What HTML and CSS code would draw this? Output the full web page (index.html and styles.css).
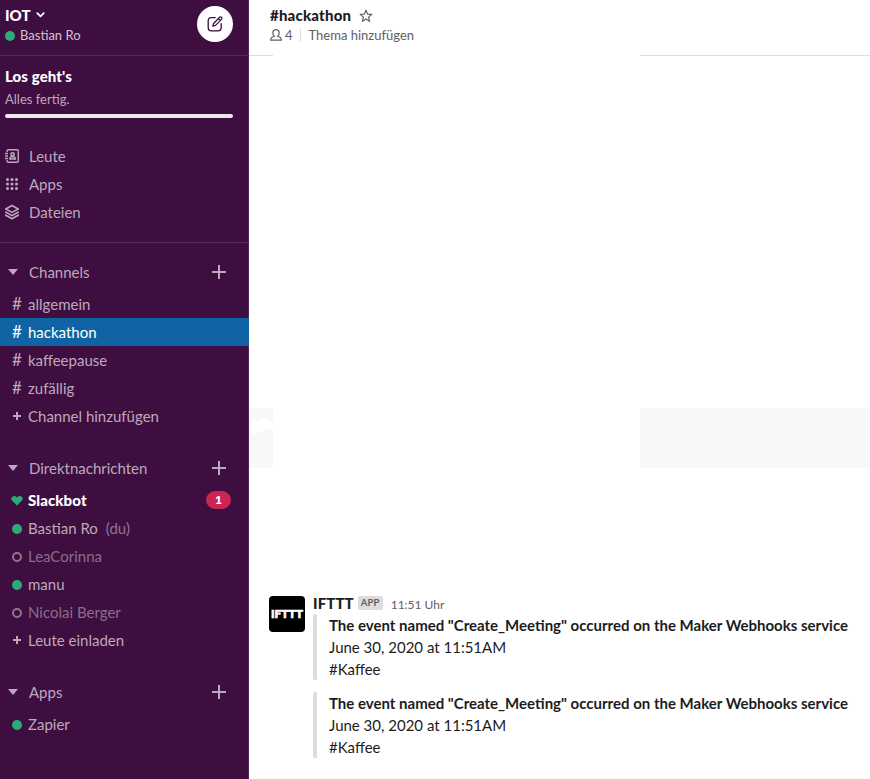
FILE: index.html
```html
<!DOCTYPE html>
<html lang="de">
<head>
<meta charset="utf-8">
<title>#hackathon | IOT</title>
<link rel="stylesheet" href="styles.css">
</head>
<body>
<div class="app">
  <aside class="sidebar">
    <header class="team">
      <div class="team-info">
        <div class="team-name"><span>IOT</span><svg width="9" height="6" viewBox="0 0 9 6"><path d="M1.3 1.2 4.5 4.4 7.7 1.2" fill="none" stroke="#fff" stroke-width="1.8" stroke-linecap="round" stroke-linejoin="round"/></svg></div>
        <div class="team-user"><i class="dot"></i><span>Bastian Ro</span></div>
      </div>
      <button class="compose" aria-label="Neue Nachricht"><svg width="18" height="18" viewBox="0 0 18 18" fill="none" stroke="#3f0e40" stroke-width="1.3" stroke-linecap="round" stroke-linejoin="round"><path d="M9.2 2.7H5.2Q2.2 2.7 2.2 5.7V12.8Q2.2 15.8 5.2 15.8H12.2Q15.2 15.8 15.2 12.8V8.6"/><path d="M6.8 11.2 7.6 8.5 13.6 2.2Q14.5 1.4 15.5 2.3T15.5 4.4L9.5 10.4ZM12.4 3.6 14.3 5.5"/></svg></button>
    </header>
    <section class="progress">
      <div class="progress-title">Los geht's</div>
      <div class="progress-text">Alles fertig.</div>
      <div class="progress-bar"></div>
    </section>
    <nav class="links">
      <a class="link"><svg width="14" height="16" viewBox="0 0 14 16" fill="none" stroke="currentColor" stroke-width="1.4"><path d="M2 4V3Q2 1.7 3.3 1.7H12Q13.3 1.7 13.3 3V13Q13.3 14.3 12 14.3H3.3Q2 14.3 2 13V12"/><path d="M0 5.5H3M0 8H3M0 10.5H3" stroke-width="1.3"/><circle cx="7.6" cy="6.4" r="1.6" stroke-width="1.6"/><path d="M4.9 11Q4.9 8.8 7.6 8.8T10.3 11Z" stroke-width="1.6"/></svg><span>Leute</span></a>
      <a class="link"><svg width="14" height="16" viewBox="0 0 14 16" fill="currentColor"><circle cx="2.5" cy="3.5" r="1.5"/><circle cx="7" cy="3.5" r="1.5"/><circle cx="11.5" cy="3.5" r="1.5"/><circle cx="2.5" cy="8" r="1.5"/><circle cx="7" cy="8" r="1.5"/><circle cx="11.5" cy="8" r="1.5"/><circle cx="2.5" cy="12.5" r="1.5"/><circle cx="7" cy="12.5" r="1.5"/><circle cx="11.5" cy="12.5" r="1.5"/></svg><span>Apps</span></a>
      <a class="link"><svg width="14" height="16" viewBox="0 0 14 16" fill="none" stroke="currentColor" stroke-width="1.6" stroke-linejoin="round" stroke-linecap="round"><path d="M7 1.5 13.2 5 7 8.4.8 5ZM.8 8.2 7 11.6 13.2 8.2M.8 11.2 7 14.7 13.2 11.2"/></svg><span>Dateien</span></a>
    </nav>
    <section class="group">
      <h2 class="group-head"><i class="caret"></i><span>Channels</span><i class="plus"></i></h2>
      <a class="row"><span class="mark hash">#</span><span>allgemein</span></a>
      <a class="row active"><span class="mark hash">#</span><span>hackathon</span></a>
      <a class="row"><span class="mark hash">#</span><span>kaffeepause</span></a>
      <a class="row"><span class="mark hash">#</span><span>zufällig</span></a>
      <a class="row"><span class="mark"><i class="plus small"></i></span><span>Channel hinzufügen</span></a>
    </section>
    <section class="group">
      <h2 class="group-head"><i class="caret"></i><span>Direktnachrichten</span><i class="plus"></i></h2>
      <a class="row unread"><span class="mark"><svg width="12" height="12" viewBox="0 0 12 12"><path d="M6 11.6 1.2 6.8Q-.3 4.9 .8 3.2 3.3.6 6 3.4 8.7.6 11.2 3.2 12.3 4.9 10.8 6.8Z" fill="#2bac76"/></svg></span><span>Slackbot</span><b class="badge">1</b></a>
      <a class="row"><span class="mark"><i class="dot"></i></span><span>Bastian Ro</span><span class="you">(du)</span></a>
      <a class="row away"><span class="mark"><i class="dot ring"></i></span><span>LeaCorinna</span></a>
      <a class="row"><span class="mark"><i class="dot"></i></span><span>manu</span></a>
      <a class="row away"><span class="mark"><i class="dot ring"></i></span><span>Nicolai Berger</span></a>
      <a class="row"><span class="mark"><i class="plus small"></i></span><span>Leute einladen</span></a>
    </section>
    <section class="group">
      <h2 class="group-head"><i class="caret"></i><span>Apps</span><i class="plus"></i></h2>
      <a class="row"><span class="mark"><i class="dot"></i></span><span>Zapier</span></a>
    </section>
  </aside>
  <main class="main">
    <header class="channel">
      <div class="channel-name"><span>#hackathon</span><svg width="14" height="14" viewBox="0 0 14 14"><path d="M7 1.2 8.6 5.1 12.8 5.4 9.6 8.1 10.6 12.3 7 10 3.4 12.3 4.4 8.1 1.2 5.4 5.4 5.1Z" fill="none" stroke="#616061" stroke-width="1.2" stroke-linejoin="round"/></svg></div>
      <div class="channel-meta"><svg width="12" height="12" viewBox="0 0 12 12" fill="none" stroke="#616061" stroke-width="1.2"><path d="M4.4 7.2Q2.8 6 2.8 3.7 3 .7 6 .7T9.2 3.7Q9.2 6 7.6 7.2L10.4 8.4Q11.3 9.2 11.3 11.2H.7Q.7 9.2 1.6 8.4Z"/></svg><span class="count">4</span><i class="sep"></i><span class="topic">Thema hinzufügen</span></div>
    </header>
    <div class="rule"><i></i><i></i></div>
    <div class="history">
      <div class="band"><div class="band-left"><svg width="24" height="60" viewBox="0 0 24 60"><path d="M3 11Q5 7 7 12L10 14 13 10 17 9 19 13H24V21L18 21 14 24H9L5 27Q2 25 2 20Z" fill="#fff"/></svg></div><div class="band-right"></div></div>
    </div>
    <article class="message">
      <div class="avatar">IFTTT</div>
      <div class="body">
        <div class="byline"><b class="author">IFTTT</b><span class="tag">APP</span><time>11:51 Uhr</time></div>
        <div class="attachment">
          <div class="title">The event named "Create_Meeting" occurred on the Maker Webhooks service</div>
          <div>June 30, 2020 at 11:51AM</div>
          <div>#Kaffee</div>
        </div>
        <div class="attachment">
          <div class="title">The event named "Create_Meeting" occurred on the Maker Webhooks service</div>
          <div>June 30, 2020 at 11:51AM</div>
          <div>#Kaffee</div>
        </div>
      </div>
    </article>
  </main>
</div>
</body>
</html>
```
FILE: styles.css
```css
* { box-sizing: border-box; }
body { margin: 0; font: 15px/22px Lato, "Liberation Sans", sans-serif; color: #1d1c1d; background: #fff; }
svg { display: block; flex: none; }
i { display: block; flex: none; font-style: normal; }
.app { display: flex; width: 870px; height: 779px; overflow: hidden; }

.sidebar { width: 249px; flex: none; background: #3f0e40; border-right: 1px solid #522653; color: #bca9bd; }
.team { display: flex; justify-content: space-between; height: 56px; padding: 6px 15px 0 5px; border-bottom: 1px solid #552a56; }
.team-name { display: flex; align-items: center; gap: 6px; height: 19px; line-height: 20px; padding-bottom: 1px; font-weight: 900; color: #fff; }
.team-user { display: flex; align-items: center; gap: 5px; height: 20px; font-size: 13px; color: #cfc3cf; }
.team-user .dot { margin-top: 1px; }
.dot { width: 10px; height: 10px; border-radius: 50%; background: #2bac76; }
.ring { background: none; border: 2px solid #8f7590; }
.compose { display: grid; place-items: center; width: 36px; height: 36px; padding: 0; border: 0; border-radius: 50%; background: #fff; }

.progress { padding: 9px 15px 0 5px; height: 86px; }
.progress-title { font-weight: 900; color: #fff; height: 22px; letter-spacing: .1px; }
.progress-text { font-size: 13px; height: 27px; line-height: 24px; }
.progress-bar { height: 4px; border-radius: 2px; background: #ece7ec; }

.links { height: 101px; border-bottom: 1px solid #552a56; }
.link { display: flex; align-items: center; gap: 10px; height: 28px; padding-left: 5px; }

.group { padding-top: 15px; }
.group + .group { padding-top: 24px; }
.group-head { display: flex; align-items: center; height: 28px; margin: 0 0 4px; padding: 0 22px 0 8px; font-size: 15px; font-weight: 400; }
.caret { margin-right: 11px; border: 5px solid transparent; border-top: 6px solid currentColor; border-bottom: 0; }
.plus { width: 14px; height: 14px; margin-left: auto; background: linear-gradient(currentColor, currentColor) center / 100% 2px no-repeat, linear-gradient(currentColor, currentColor) center / 2px 100% no-repeat; }
.plus.small { width: 8px; height: 8px; margin: 0; background-size: 100% 2px, 2px 100%; }
.row { display: flex; align-items: center; height: 28px; padding: 0 17px 0 11px; }
.mark { display: grid; place-items: center; flex: none; width: 12px; margin-right: 5px; }
.hash { font-size: 17px; }
.mark .dot { margin-top: 2px; }
.active { margin-right: -1px; background: #1164a3; color: #fff; }
.unread { font-weight: 900; color: #fff; letter-spacing: .1px; }
.away { color: #896d8a; }
.you { margin-left: 8px; color: #8f7590; }
.badge { margin-left: auto; width: 25px; height: 18px; border-radius: 9px; background: #cd2553; font-size: 12px; line-height: 17px; text-align: center; }

.main { flex: 1; display: flex; flex-direction: column; }
.channel { height: 55px; padding: 6px 0 0 21px; }
.channel-name { display: flex; align-items: center; gap: 8px; height: 19px; line-height: 20px; font-weight: 900; letter-spacing: .2px; }
.channel-name span { padding-bottom: 1px; }
.channel-meta { display: flex; align-items: center; height: 20px; font-size: 13px; color: #616061; }
.count { margin-left: 3px; }
.sep { width: 1px; height: 13px; margin: 0 8px 0 7px; background: #ddd; }
.rule { display: flex; justify-content: space-between; }
.rule i { width: 24px; height: 1px; background: #ddd; }
.rule i + i { width: 230px; }
.history { height: 540px; padding-top: 352px; }
.band { display: flex; justify-content: space-between; height: 60px; }
.band-left { width: 24px; background: #f8f8f8; }
.band-right { width: 230px; background: #f8f8f8; }

.message { display: flex; gap: 8px; padding-left: 20px; }
.avatar { width: 36px; height: 36px; border-radius: 4px; background: #000; color: #fff; font-weight: 900; font-size: 12px; line-height: 36px; text-align: center; -webkit-text-stroke: .6px #fff; }
.body { flex: 1; }
.byline { display: flex; align-items: center; height: 18px; padding-bottom: 4px; }
.author { font-weight: 900; letter-spacing: .1px; }
.tag { margin-left: 4px; padding: 0 3px; height: 14px; border-radius: 2px; background: #ddd; color: #616061; font-size: 9.5px; line-height: 14px; font-weight: 700; letter-spacing: .2px; }
time { margin: 3px 0 0 8px; font-size: 12px; color: #616061; }
.attachment { width: max-content; padding-left: 16px; margin-bottom: 12px; background: linear-gradient(#ddd, #ddd) 0 0 / 4px 100% no-repeat; border-radius: 2px; }
.title { font-weight: 700; }
```
